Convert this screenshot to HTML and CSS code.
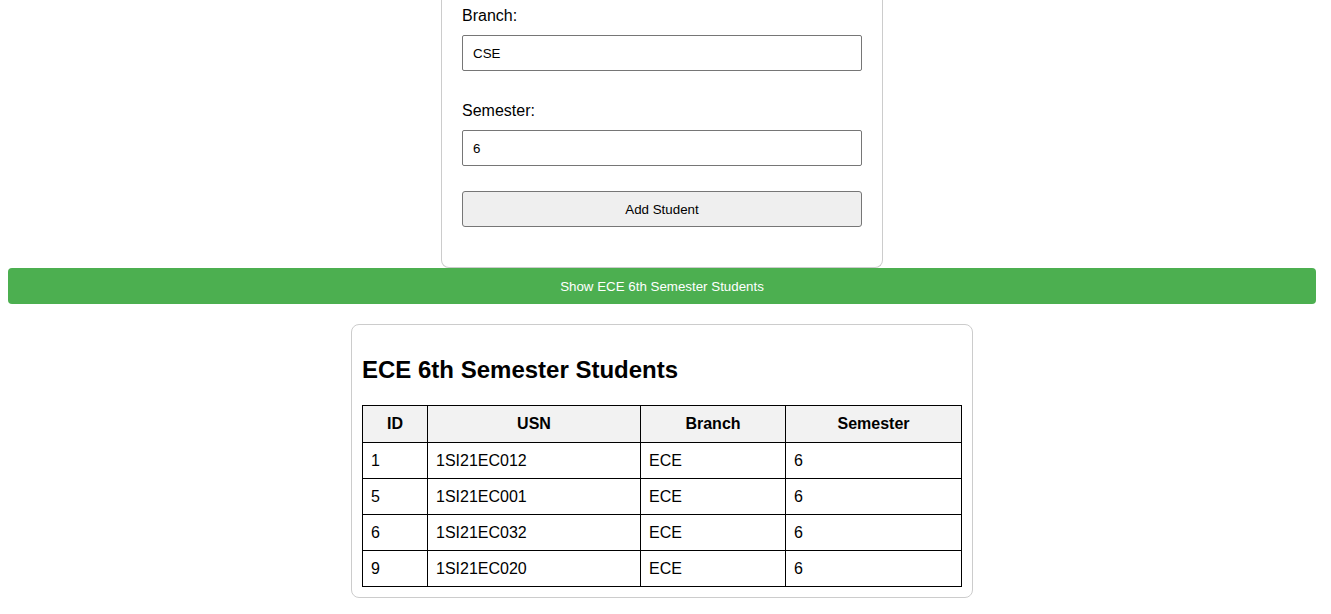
FILE: index.html
```html
<!DOCTYPE html>
<html lang="en">
<head>
<meta charset="utf-8">
<title>Students</title>
<link rel="stylesheet" href="styles.css">
</head>
<body>
<div class="page">
  <form class="form-card">
    <div class="fields">
      <div class="field">
        <label for="branch">Branch:</label>
        <input id="branch" type="text" value="CSE">
      </div>
      <div class="field">
        <label for="semester">Semester:</label>
        <input id="semester" type="text" value="6">
      </div>
    </div>
    <button type="button" class="add-btn">Add Student</button>
  </form>
  <button type="button" class="show-btn">Show ECE 6th Semester Students</button>
  <section class="table-card">
    <h2>ECE 6th Semester Students</h2>
    <table>
      <colgroup>
        <col class="c-id"><col class="c-usn"><col class="c-branch"><col class="c-sem">
      </colgroup>
      <thead>
        <tr><th>ID</th><th>USN</th><th>Branch</th><th>Semester</th></tr>
      </thead>
      <tbody>
        <tr><td>1</td><td>1SI21EC012</td><td>ECE</td><td>6</td></tr>
        <tr><td>5</td><td>1SI21EC001</td><td>ECE</td><td>6</td></tr>
        <tr><td>6</td><td>1SI21EC032</td><td>ECE</td><td>6</td></tr>
        <tr><td>9</td><td>1SI21EC020</td><td>ECE</td><td>6</td></tr>
      </tbody>
    </table>
  </section>
</div>
</body>
</html>
```
FILE: styles.css
```css
html, body {
  margin: 0;
  padding: 0;
  background: #fff;
}
body {
  font-family: "Liberation Sans", Arial, sans-serif;
  font-size: 16px;
  color: #000;
}
.page {
  padding: 0 15px 0 8px;
  display: flex;
  flex-direction: column;
  align-items: center;
}
.form-card {
  width: 400px;
  padding: 7px 20px 20px;
  border: 1px solid #ccc;
  border-top: none;
  border-radius: 0 0 8px 8px;
  display: flex;
  flex-direction: column;
  margin: 0;
}
.fields {
  display: flex;
  flex-direction: column;
  gap: 31px;
}
.field {
  display: flex;
  flex-direction: column;
  gap: 10px;
}
.field label {
  display: block;
  font-size: 16px;
  line-height: 18px;
}
.field input {
  box-sizing: border-box;
  width: 400px;
  height: 36px;
  margin: 0;
  padding: 0 10px;
  border: 1px solid #767676;
  border-radius: 2px;
  font-family: "Liberation Sans", Arial, sans-serif;
  font-size: 13.333px;
  color: #000;
  background: #fff;
}
.add-btn {
  box-sizing: border-box;
  width: 400px;
  height: 36px;
  margin: 25px 0 20px;
  padding: 0;
  border: 1px solid #767676;
  border-radius: 3px;
  background: #efefef;
  font-family: "Liberation Sans", Arial, sans-serif;
  font-size: 13.333px;
  color: #000;
}
.show-btn {
  box-sizing: border-box;
  width: 100%;
  height: 36px;
  margin: 0;
  padding: 0;
  border: none;
  border-radius: 4px;
  background: #4caf50;
  color: #fff;
  font-family: "Liberation Sans", Arial, sans-serif;
  font-size: 13.333px;
}
.table-card {
  width: 600px;
  margin-top: 20px;
  padding: 10px;
  border: 1px solid #ccc;
  border-radius: 8px;
}
.table-card h2 {
  margin: 21px 0 21px;
  font-size: 24px;
  font-weight: bold;
  line-height: 28px;
}
table {
  width: 599px;
  border-collapse: collapse;
  table-layout: fixed;
}
.c-id { width: 65px; }
.c-usn { width: 213px; }
.c-branch { width: 145px; }
.c-sem { width: 176px; }
th, td {
  border: 1px solid #000;
  padding: 8px;
  font-size: 16px;
  line-height: 19px;
  text-align: left;
}
th {
  background: #f2f2f2;
  text-align: center;
  font-weight: bold;
  padding-top: 8px;
  padding-bottom: 9px;
}
```
